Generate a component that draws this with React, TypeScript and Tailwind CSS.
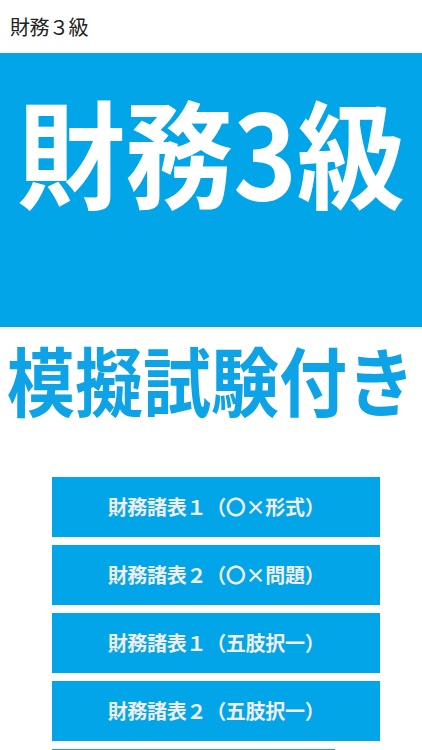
const blue = 'bg-[#02a5e7]'

const items = [
  '財務諸表１（〇×形式）',
  '財務諸表２（〇×問題）',
  '財務諸表１（五肢択一）',
  '財務諸表２（五肢択一）',
]

export default function App() {
  return (
    <div
      className="w-[422px] h-[750px] overflow-hidden bg-white"
      style={{ fontFamily: '"Noto Sans CJK JP", "Noto Sans", sans-serif' }}
    >
      <header className="h-[53px] flex items-center pl-[10px]">
        <span className="text-[20px] text-[#222222] tracking-[-0.5px]">財務３級</span>
      </header>

      <div className={`h-[274px] ${blue} flex justify-center pt-[47px]`}>
        <span className="inline-block text-[108px] leading-none font-bold text-white scale-y-[1.08]">
          財務3級
        </span>
      </div>

      <div className="h-[150px] flex justify-center pt-[21px]">
        <span className="inline-block text-[68px] leading-none font-bold text-[#0ea3e6] scale-y-[1.1]">
          模擬試験付き
        </span>
      </div>

      <div className="flex flex-col gap-2 pl-[52px]">
        {items.map((label, i) => (
          <button
            key={i}
            className={`w-[328px] h-[60px] shrink-0 ${blue} flex items-center justify-center text-[20px] font-bold text-[#eeeeee] tracking-[-0.3px]`}
          >
            {label}
          </button>
        ))}
        {/* next item, only its top edge is on screen */}
        <div className={`w-[283px] h-[60px] shrink-0 ${blue}`} />
      </div>
    </div>
  )
}
